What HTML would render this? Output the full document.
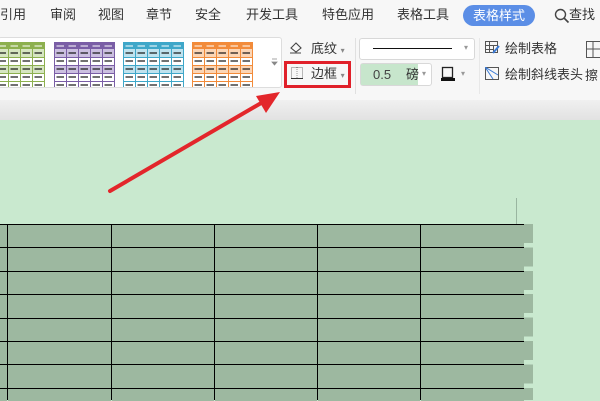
<!DOCTYPE html>
<html><head><meta charset="utf-8"><style>
*{margin:0;padding:0;box-sizing:border-box}
body{width:600px;height:400px;overflow:hidden;position:relative;background:#c9e9cf;font-family:"Liberation Sans","Noto Sans CJK SC",sans-serif;color:#333}
.abs{position:absolute}
.tab{position:absolute;top:6px;font-size:13px;line-height:18px;color:#333}
.t{position:absolute;font-size:13px;line-height:16px;color:#333;white-space:nowrap}
#tb{position:absolute;left:0;top:225px;width:524px;height:176px;display:grid;grid-template-columns:7px 103px 102px 102px 102px 103px;grid-auto-rows:22.4px;gap:1px 1px;overflow:hidden}
#tb div{background:#9db8a0}
</style></head><body>
<div class="abs" style="left:0;top:0;width:600px;height:100px;background:#f7f7f7"></div>
<div class="abs" style="left:0;top:100px;width:600px;height:20px;background:linear-gradient(#f0f0f0,#e2e2e2)"></div>
<div class="tab" style="left:0">引用</div>
<div class="tab" style="left:50px">审阅</div>
<div class="tab" style="left:98px">视图</div>
<div class="tab" style="left:146px">章节</div>
<div class="tab" style="left:195px">安全</div>
<div class="tab" style="left:246px">开发工具</div>
<div class="tab" style="left:322px">特色应用</div>
<div class="tab" style="left:397px">表格工具</div>
<div class="abs" style="left:463px;top:5px;width:72px;height:21px;border-radius:11px;background:#5b8ee6;color:#fff;font-size:13px;line-height:21px;text-align:center">表格样式</div>
<svg class="abs" style="left:554px;top:8px" width="16" height="16"><circle cx="6.5" cy="6.5" r="5" fill="none" stroke="#444" stroke-width="1.4"/><line x1="10" y1="10" x2="14.5" y2="14.5" stroke="#444" stroke-width="1.6"/></svg>
<div class="tab" style="left:569px">查找</div>
<div class="abs" style="left:-2px;top:37px;width:284px;height:51px;background:#fff;border:1px solid #ddd;border-radius:3px"></div>
<svg class="abs" style="left:0;top:42px" width="280" height="45">
<defs>
<pattern id="d1" x="-4" y="7" width="12" height="8" patternUnits="userSpaceOnUse"><line x1="2.5" y1="4" x2="10" y2="4" stroke="#111" stroke-width="1.2"/></pattern>
<pattern id="d2" x="54" y="7" width="12" height="8" patternUnits="userSpaceOnUse"><line x1="2.5" y1="4" x2="10" y2="4" stroke="#111" stroke-width="1.2"/></pattern>
<pattern id="d3" x="123" y="7" width="12" height="8" patternUnits="userSpaceOnUse"><line x1="2.5" y1="4" x2="10" y2="4" stroke="#111" stroke-width="1.2"/></pattern>
<pattern id="d4" x="192" y="7" width="12" height="8" patternUnits="userSpaceOnUse"><line x1="2.5" y1="4" x2="10" y2="4" stroke="#111" stroke-width="1.2"/></pattern>
<pattern id="w1" x="-4" y="0" width="12" height="7" patternUnits="userSpaceOnUse"><line x1="2.5" y1="4" x2="10" y2="4" stroke="#fff" stroke-width="1"/></pattern>
<pattern id="w2" x="54" y="0" width="12" height="7" patternUnits="userSpaceOnUse"><line x1="2.5" y1="4" x2="10" y2="4" stroke="#fff" stroke-width="1"/></pattern>
<pattern id="w3" x="123" y="0" width="12" height="7" patternUnits="userSpaceOnUse"><line x1="2.5" y1="4" x2="10" y2="4" stroke="#fff" stroke-width="1"/></pattern>
<pattern id="w4" x="192" y="0" width="12" height="7" patternUnits="userSpaceOnUse"><line x1="2.5" y1="4" x2="10" y2="4" stroke="#fff" stroke-width="1"/></pattern>
</defs>
<rect x="-16" y="0" width="61" height="7" fill="#8db04f"/>
<rect x="-16" y="7" width="61" height="8" fill="#d6e6c1"/><rect x="-16" y="23" width="61" height="8" fill="#d6e6c1"/>
<g stroke="#8db04f"><line x1="8.5" y1="0" x2="8.5" y2="45"/><line x1="20.5" y1="0" x2="20.5" y2="45"/><line x1="32.5" y1="0" x2="32.5" y2="45"/><line x1="44.5" y1="0" x2="44.5" y2="45"/><line x1="-4" y1="15.5" x2="45" y2="15.5"/><line x1="-4" y1="23.5" x2="45" y2="23.5"/><line x1="-4" y1="31.5" x2="45" y2="31.5"/><line x1="-4" y1="39.5" x2="45" y2="39.5"/></g>
<rect x="54" y="0" width="61" height="7" fill="#7a5ea6"/>
<rect x="54" y="7" width="61" height="8" fill="#cbbfe0"/><rect x="54" y="23" width="61" height="8" fill="#cbbfe0"/>
<g stroke="#7a5ea6"><line x1="54.5" y1="0" x2="54.5" y2="45"/><line x1="66.5" y1="0" x2="66.5" y2="45"/><line x1="78.5" y1="0" x2="78.5" y2="45"/><line x1="90.5" y1="0" x2="90.5" y2="45"/><line x1="102.5" y1="0" x2="102.5" y2="45"/><line x1="114.5" y1="0" x2="114.5" y2="45"/><line x1="54" y1="15.5" x2="115" y2="15.5"/><line x1="54" y1="23.5" x2="115" y2="23.5"/><line x1="54" y1="31.5" x2="115" y2="31.5"/><line x1="54" y1="39.5" x2="115" y2="39.5"/></g>
<rect x="123" y="0" width="61" height="7" fill="#3fa7c9"/>
<rect x="123" y="7" width="61" height="8" fill="#bfe2ee"/><rect x="123" y="23" width="61" height="8" fill="#bfe2ee"/>
<g stroke="#3fa7c9"><line x1="123.5" y1="0" x2="123.5" y2="45"/><line x1="135.5" y1="0" x2="135.5" y2="45"/><line x1="147.5" y1="0" x2="147.5" y2="45"/><line x1="159.5" y1="0" x2="159.5" y2="45"/><line x1="171.5" y1="0" x2="171.5" y2="45"/><line x1="183.5" y1="0" x2="183.5" y2="45"/><line x1="123" y1="15.5" x2="184" y2="15.5"/><line x1="123" y1="23.5" x2="184" y2="23.5"/><line x1="123" y1="31.5" x2="184" y2="31.5"/><line x1="123" y1="39.5" x2="184" y2="39.5"/></g>
<rect x="192" y="0" width="61" height="7" fill="#f28b3a"/>
<rect x="192" y="7" width="61" height="8" fill="#fbd5b5"/><rect x="192" y="23" width="61" height="8" fill="#fbd5b5"/>
<g stroke="#f28b3a"><line x1="192.5" y1="0" x2="192.5" y2="45"/><line x1="204.5" y1="0" x2="204.5" y2="45"/><line x1="216.5" y1="0" x2="216.5" y2="45"/><line x1="228.5" y1="0" x2="228.5" y2="45"/><line x1="240.5" y1="0" x2="240.5" y2="45"/><line x1="252.5" y1="0" x2="252.5" y2="45"/><line x1="192" y1="15.5" x2="253" y2="15.5"/><line x1="192" y1="23.5" x2="253" y2="23.5"/><line x1="192" y1="31.5" x2="253" y2="31.5"/><line x1="192" y1="39.5" x2="253" y2="39.5"/></g>
<rect x="0" y="0" width="45" height="7" fill="url(#w1)"/><rect x="54" y="0" width="61" height="7" fill="url(#w2)"/><rect x="123" y="0" width="61" height="7" fill="url(#w3)"/><rect x="192" y="0" width="61" height="7" fill="url(#w4)"/>
<rect x="0" y="7" width="45" height="40" fill="url(#d1)"/><rect x="54" y="7" width="61" height="40" fill="url(#d2)"/><rect x="123" y="7" width="61" height="40" fill="url(#d3)"/><rect x="192" y="7" width="61" height="40" fill="url(#d4)"/>
<path d="M272 17h5M272 20l2.5 3 2.5-3z" fill="#888" stroke="#888" stroke-width="0.8"/>
</svg>
<svg class="abs" style="left:289px;top:41px" width="14" height="14"><path d="M2 7 L7 2 L12 7 L7 11 Z M1 12 H12" fill="none" stroke="#444" stroke-width="1.1"/></svg>
<div class="t" style="left:311px;top:41px">底纹 <span style="font-size:8px;color:#888">▾</span></div>
<div class="abs" style="left:284px;top:61px;width:67px;height:27px;border:3px solid #e0202a"></div>
<svg class="abs" style="left:291px;top:67px" width="12" height="12"><rect x="0.5" y="0.5" width="11" height="11" fill="none" stroke="#777" stroke-dasharray="1 1"/><line x1="6" y1="0" x2="6" y2="12" stroke="#999" stroke-dasharray="1 1"/><line x1="0" y1="11.5" x2="12" y2="11.5" stroke="#333"/></svg>
<div class="t" style="left:311px;top:66px">边框 <span style="font-size:8px;color:#888">▾</span></div>
<div class="abs" style="left:355px;top:38px;width:1px;height:56px;background:#e0e0e0"></div>
<div class="abs" style="left:359px;top:38px;width:116px;height:22px;background:#fff;border:1px solid #d8d8d8;border-radius:3px"></div>
<div class="abs" style="left:373px;top:48px;width:79px;height:1px;background:#111"></div>
<div class="abs" style="left:464px;top:43px;font-size:8px;color:#999">▾</div>
<div class="abs" style="left:360px;top:63px;width:72px;height:23px;background:#fff;border:1px solid #d8d8d8;border-radius:3px"></div>
<div class="abs" style="left:361px;top:64px;width:57px;height:21px;background:#c7e6cc"></div>
<div class="t" style="left:373px;top:67px;color:#444">0.5</div>
<div class="t" style="left:406px;top:67px">磅</div>
<div class="abs" style="left:422px;top:69px;font-size:8px;color:#999">▾</div>
<svg class="abs" style="left:441px;top:66px" width="14" height="16"><rect x="1.5" y="1.5" width="10" height="10" fill="none" stroke="#222" stroke-width="1.3"/><rect x="0" y="12" width="14" height="3" fill="#111"/></svg>
<div class="abs" style="left:461px;top:69px;font-size:8px;color:#999">▾</div>
<div class="abs" style="left:479px;top:38px;width:1px;height:56px;background:#e8e8e8"></div>
<svg class="abs" style="left:485px;top:41px" width="16" height="14"><rect x="0.5" y="0.5" width="12" height="11" fill="none" stroke="#555"/><path d="M0 4.5H12M4.5 0V12M8.5 4V12M0 8.5H8" stroke="#555"/><path d="M8 12 L14 5" stroke="#3b7bd6" stroke-width="2"/></svg>
<div class="t" style="left:505px;top:41px">绘制表格</div>
<svg class="abs" style="left:485px;top:67px" width="15" height="14"><rect x="0.5" y="0.5" width="13" height="12" fill="none" stroke="#555"/><path d="M0 0 L13 8 M0 0 L8 12" stroke="#3b7bd6"/></svg>
<div class="t" style="left:505px;top:67px">绘制斜线表头</div>
<svg class="abs" style="left:586px;top:41px" width="14" height="18"><rect x="0.5" y="0.5" width="14" height="16" fill="none" stroke="#555"/><path d="M0 8H14M7 0V16" stroke="#555"/></svg>
<div class="t" style="left:585px;top:68px">擦</div>
<div class="abs" style="left:0;top:224px;width:525px;height:176px;background:#000"></div>
<div class="abs" style="left:516px;top:198px;width:1px;height:26px;background:#99b5a0"></div>
<div class="abs" style="left:524px;top:224px;width:9px;height:176px;background:repeating-linear-gradient(#9db8a0 0 19px,#c9e9cf 19px 23.4px)"></div>
<div id="tb"><div></div><div></div><div></div><div></div><div></div><div></div><div></div><div></div><div></div><div></div><div></div><div></div><div></div><div></div><div></div><div></div><div></div><div></div><div></div><div></div><div></div><div></div><div></div><div></div><div></div><div></div><div></div><div></div><div></div><div></div><div></div><div></div><div></div><div></div><div></div><div></div><div></div><div></div><div></div><div></div><div></div><div></div><div></div><div></div><div></div><div></div><div></div><div></div></div>
<svg class="abs" style="left:0;top:0" width="600" height="400">
<line x1="110" y1="191" x2="268" y2="99" stroke="#e3262b" stroke-width="4" stroke-linecap="round"/>
<polygon points="280,92 256,96 266,113" fill="#e3262b"/>
</svg>
</body></html>
